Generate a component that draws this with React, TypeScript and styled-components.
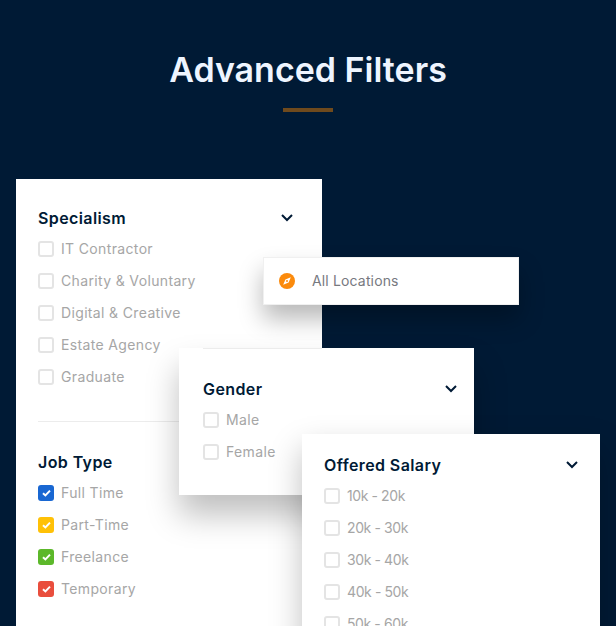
import { ReactElement } from "react";
import styled, { createGlobalStyle } from "styled-components";

const GlobalStyle = createGlobalStyle`
    html, body {
        margin: 0;
        padding: 0;
        background: #001a35;
    }
    body {
        font-family: "Inter", "Open Sans", sans-serif;
    }
`;

const Stage = styled.div`
    position: relative;
    width: 616px;
    height: 626px;
    overflow: hidden;
    background: #001a35;
`;

const Header = styled.header`
    display: flex;
    flex-direction: column;
    align-items: center;
    padding-top: 47px;
    height: 132px;
    box-sizing: border-box;
`;

const Title = styled.h1`
    margin: 0;
    font-size: 34px;
    line-height: 46px;
    font-weight: 600;
    color: #eef5ff;
`;

const TitleRule = styled.div`
    width: 50px;
    height: 4px;
    margin-top: 15px;
    background: #6f4a1d;
`;

const Card = styled.section`
    box-sizing: border-box;
    background: #fff;
`;

const MainCard = styled(Card)`
    width: 306px;
    height: 470px;
    margin: 47px 0 0 16px;
    padding: 27px 29px 0 22px;
`;

const GenderCard = styled(Card)`
    position: absolute;
    left: 179px;
    top: 348px;
    width: 295px;
    height: 147px;
    padding: 0 17px 0 24px;
    box-shadow: 0 20px 30px rgba(0, 0, 0, 0.25);
`;

const GenderTopRule = styled.div`
    width: 119px;
    height: 1px;
    margin-bottom: 28px;
    background: #ececec;
`;

const SalaryCard = styled(Card)`
    position: absolute;
    left: 302px;
    top: 434px;
    width: 298px;
    height: 240px;
    padding: 19px 22px 0;
    box-shadow: 0 15px 30px rgba(0, 0, 0, 0.25);
`;

const LocationCard = styled(Card)`
    position: absolute;
    left: 263px;
    top: 257px;
    width: 256px;
    height: 48px;
    padding: 0 15px;
    display: flex;
    align-items: center;
    gap: 17px;
    font-size: 14px;
    letter-spacing: 0.15px;
    color: #77797f;
    border: 1px solid #f0f0f0;
    box-shadow: 0 14px 24px rgba(0, 0, 0, 0.28);
`;

const HeadingRow = styled.div`
    display: flex;
    align-items: center;
    justify-content: space-between;
    height: 24px;
    margin-bottom: 7px;
`;

const Heading = styled.h3`
    margin: 0;
    font-size: 16px;
    line-height: 24px;
    font-weight: 600;
    letter-spacing: 0.4px;
    color: #001a35;
`;

const OptionList = styled.ul<{ $spacing?: string }>`
    list-style: none;
    margin: 0;
    padding: 0;
    display: flex;
    flex-direction: column;
    gap: 8px;
    letter-spacing: ${(p) => p.$spacing ?? "0.35px"};
`;

const Option = styled.li`
    display: flex;
    align-items: center;
    gap: 7px;
    height: 24px;
    font-size: 14px;
    color: #a6a6a6;
`;

const Label = styled.span`
    padding-bottom: 2px;
`;

const Box = styled.span<{ $color?: string }>`
    box-sizing: border-box;
    width: 16px;
    height: 16px;
    display: flex;
    align-items: center;
    justify-content: center;
    border-radius: 3px;
    background: ${(p) => p.$color ?? "#fff"};
    border: ${(p) => (p.$color ? "none" : "2px solid #e4e4e4")};
`;

const Rule = styled.hr`
    border: 0;
    height: 1px;
    background: #ececec;
    margin: 32px 0 28px 0;
`;

const Chevron = (): ReactElement => (
    <svg width="12" height="8" viewBox="0 0 12 8" fill="none">
        <path d="M1 1 6 6 11 1" stroke="#001a35" strokeWidth="2" />
    </svg>
);

const Check = (): ReactElement => (
    <svg width="9" height="8" viewBox="0 0 9 8" fill="none">
        <path d="M1 4.2 3.4 6.4 8 1.6" stroke="#fff" strokeWidth="2" />
    </svg>
);

const Compass = (): ReactElement => (
    <svg width="16" height="16" viewBox="0 0 16 16">
        <circle cx="8" cy="8" r="8" fill="#fb8a0c" />
        <path d="M11.8 4.2 9.6 9.6 4.2 11.8 6.4 6.4Z" fill="#fff" />
        <circle cx="8" cy="8" r="1" fill="#fb8a0c" />
    </svg>
);

const specialisms = ["IT Contractor", "Charity & Voluntary", "Digital & Creative", "Estate Agency", "Graduate"];
const jobTypes = [
    { label: "Full Time", color: "#1967d2" },
    { label: "Part-Time", color: "#ffc107" },
    { label: "Freelance", color: "#5cb82a" },
    { label: "Temporary", color: "#e94e3d" },
];
const genders = ["Male", "Female"];
const salaries = ["10k - 20k", "20k - 30k", "30k - 40k", "40k - 50k", "50k - 60k"];

const PlainOptions = ({ items, spacing }: { items: string[]; spacing?: string }): ReactElement => (
    <OptionList $spacing={spacing}>
        {items.map((item) => (
            <Option key={item}>
                <Box />
                <Label>{item}</Label>
            </Option>
        ))}
    </OptionList>
);

const App = (): ReactElement => {
    return (
        <Stage>
            <GlobalStyle />
            <Header>
                <Title>Advanced Filters</Title>
                <TitleRule />
            </Header>

            <MainCard>
                <HeadingRow>
                    <Heading>Specialism</Heading>
                    <Chevron />
                </HeadingRow>
                <PlainOptions items={specialisms} />
                <Rule />
                <HeadingRow>
                    <Heading>Job Type</Heading>
                </HeadingRow>
                <OptionList>
                    {jobTypes.map((type) => (
                        <Option key={type.label}>
                            <Box $color={type.color}>
                                <Check />
                            </Box>
                            <Label>{type.label}</Label>
                        </Option>
                    ))}
                </OptionList>
            </MainCard>

            <LocationCard>
                <Compass />
                <Label>All Locations</Label>
            </LocationCard>

            <GenderCard>
                <GenderTopRule />
                <HeadingRow>
                    <Heading>Gender</Heading>
                    <Chevron />
                </HeadingRow>
                <PlainOptions items={genders} />
            </GenderCard>

            <SalaryCard>
                <HeadingRow>
                    <Heading>Offered Salary</Heading>
                    <Chevron />
                </HeadingRow>
                <PlainOptions items={salaries} spacing="-0.4px" />
            </SalaryCard>
        </Stage>
    );
};

export default App;
